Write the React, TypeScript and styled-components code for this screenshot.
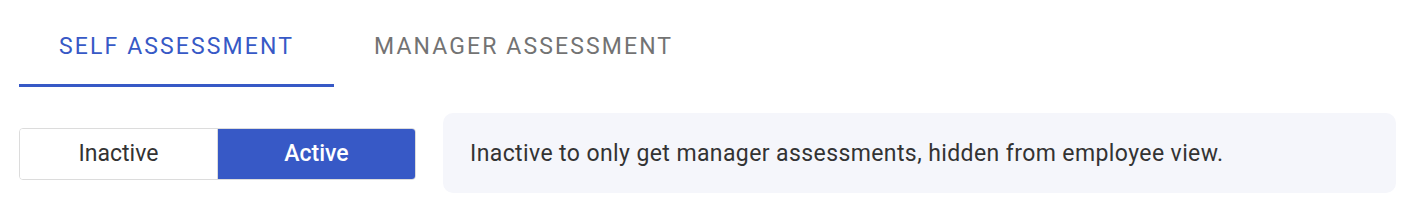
import React, { useState } from "react";
import styled, { createGlobalStyle } from "styled-components";

const GlobalStyle = createGlobalStyle`
  html, body { margin: 0; padding: 0; background: #ffffff; }
  body { font-family: Roboto, "Noto Sans", sans-serif; }
  * { box-sizing: border-box; }
`;

const Page = styled.div`
  display: flex;
  flex-direction: column;
  padding: 0 15px 0 19px;
  gap: 26px;
`;

const TabBar = styled.div`
  display: flex;
  height: 87px;
`;

const Tab = styled.button<{ $active?: boolean }>`
  position: relative;
  border: none;
  background: transparent;
  padding: 33px 40px 0;
  font-family: Roboto, sans-serif;
  font-weight: 400;
  font-size: 23px;
  line-height: 27px;
  letter-spacing: 2.12px;
  text-transform: uppercase;
  color: ${(p) => (p.$active ? "#3759c6" : "#737373")};
  cursor: pointer;
  display: flex;
  align-items: flex-start;
  &::after {
    content: "";
    position: absolute;
    left: 0;
    right: 0;
    bottom: 0;
    height: 3px;
    background: ${(p) => (p.$active ? "#3759c6" : "transparent")};
  }
`;

const Row = styled.div`
  display: flex;
  align-items: center;
  gap: 27px;
`;

const Toggle = styled.div`
  display: flex;
  width: 397px;
  height: 52px;
  margin-top: 1px;
  border: 1px solid #dcdcdc;
  border-radius: 4px;
  overflow: hidden;
  flex-shrink: 0;
`;

const Segment = styled.button<{ $active?: boolean }>`
  flex: 1;
  border: none;
  background: ${(p) => (p.$active ? "#3759c6" : "#ffffff")};
  color: ${(p) => (p.$active ? "#ffffff" : "#333333")};
  font-family: Roboto, sans-serif;
  font-size: 23px;
  font-weight: ${(p) => (p.$active ? 500 : 400)};
  cursor: pointer;
  & + & {
    border-left: 1px solid #dcdcdc;
  }
`;

const InfoBox = styled.div`
  flex: 1;
  height: 80px;
  background: #f5f6fb;
  border-radius: 10px;
  display: flex;
  align-items: center;
  padding: 0 27px;
  font-family: Roboto, sans-serif;
  font-size: 23px;
  letter-spacing: 0.4px;
  color: #333333;
`;

export default function App() {
  const [tab, setTab] = useState(0);
  const [active, setActive] = useState(true);
  return (
    <>
      <GlobalStyle />
      <Page>
        <TabBar>
          <Tab $active={tab === 0} onClick={() => setTab(0)}>
            Self Assessment
          </Tab>
          <Tab $active={tab === 1} onClick={() => setTab(1)}>
            Manager Assessment
          </Tab>
        </TabBar>
        <Row>
          <Toggle>
            <Segment $active={!active} onClick={() => setActive(false)}>
              Inactive
            </Segment>
            <Segment $active={active} onClick={() => setActive(true)}>
              Active
            </Segment>
          </Toggle>
          <InfoBox>
            Inactive to only get manager assessments, hidden from employee view.
          </InfoBox>
        </Row>
      </Page>
    </>
  );
}
